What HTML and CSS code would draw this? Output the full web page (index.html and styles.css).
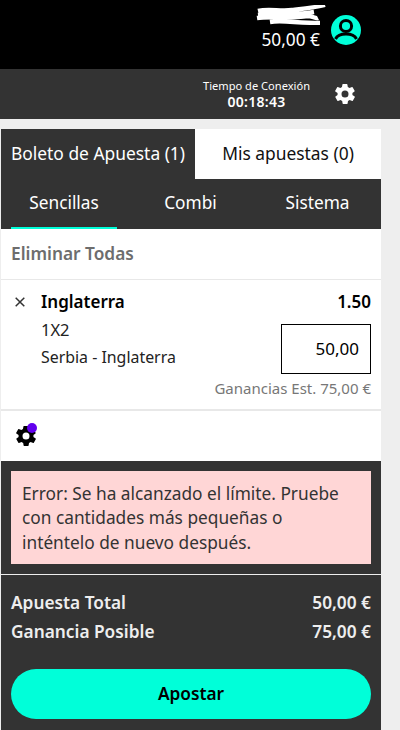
FILE: index.html
```html
<!DOCTYPE html>
<html>
<head>
    <title>Boleto de Apuesta</title>
    <link rel="stylesheet" href="styles.css">
</head>
<body>
    <header class="top-bar">
        <div class="account">
            <svg class="scribble" width="70" height="20" viewBox="0 0 70 20">
                <path d="M2 6 C14 3 24 7 36 5 C46 4 58 3 69 0 M2 10 C18 8 36 11 58 7 M1 13 C14 11 34 14 52 11 C56 11 60 14 62 13 M14 17 C26 15 40 18 64 18" fill="none" stroke="#fff" stroke-width="4.4"/>
            </svg>
            <span class="balance">50,00 €</span>
        </div>
        <svg class="avatar" width="30" height="30" viewBox="0 0 30 30">
            <circle cx="15" cy="15" r="15" fill="#00ffd9"/>
            <circle cx="15" cy="11" r="5.6" fill="none" stroke="#000" stroke-width="3"/>
            <path d="M4.5 24 C6.5 19.8 10 19 15 19 C20 19 23.5 19.8 25.5 24" fill="none" stroke="#000" stroke-width="3"/>
        </svg>
    </header>

    <div class="session-bar">
        <div class="session">
            <div class="session-label">Tiempo de Conexión</div>
            <div class="session-time">00:18:43</div>
        </div>
        <svg class="gear" width="24" height="24" viewBox="0 0 24 24">
            <path fill="#fff" d="M19.4 13a7.6 7.6 0 0 0 0-2l2.1-1.6a.5.5 0 0 0 .1-.6l-2-3.5a.5.5 0 0 0-.6-.2l-2.5 1a7.3 7.3 0 0 0-1.7-1l-.4-2.6a.5.5 0 0 0-.5-.4h-4a.5.5 0 0 0-.5.4l-.4 2.6a7.3 7.3 0 0 0-1.7 1l-2.5-1a.5.5 0 0 0-.6.2l-2 3.5a.5.5 0 0 0 .1.6L4.6 11a7.6 7.6 0 0 0 0 2l-2.1 1.6a.5.5 0 0 0-.1.6l2 3.5a.5.5 0 0 0 .6.2l2.5-1a7.3 7.3 0 0 0 1.7 1l.4 2.6a.5.5 0 0 0 .5.4h4a.5.5 0 0 0 .5-.4l.4-2.6a7.3 7.3 0 0 0 1.7-1l2.5 1a.5.5 0 0 0 .6-.2l2-3.5a.5.5 0 0 0-.1-.6zM12 15.5a3.5 3.5 0 1 1 0-7 3.5 3.5 0 0 1 0 7z"/>
        </svg>
    </div>

    <main class="slip">
        <div class="tabs">
            <div class="tab tab-active">Boleto de Apuesta (1)</div>
            <div class="tab">Mis apuestas (0)</div>
        </div>

        <div class="subtabs">
            <div class="subtab subtab-active">Sencillas</div>
            <div class="subtab">Combi</div>
            <div class="subtab">Sistema</div>
        </div>

        <div class="remove-all">Eliminar Todas</div>

        <div class="selection">
            <svg class="close" width="10" height="10" viewBox="0 0 10 10">
                <path d="M0.7 0.7 L9.3 9.3 M9.3 0.7 L0.7 9.3" stroke="#333" stroke-width="1.5"/>
            </svg>
            <div class="selection-info">
                <div class="selection-head">
                    <span>Inglaterra</span>
                    <span>1.50</span>
                </div>
                <div class="selection-body">
                    <div>
                        <div class="market">1X2</div>
                        <div class="match">Serbia - Inglaterra</div>
                    </div>
                    <div class="stake">50,00</div>
                </div>
                <div class="estimate">Ganancias Est. 75,00 €</div>
            </div>
        </div>

        <div class="options">
            <span class="options-icon">
                <svg width="24" height="24" viewBox="0 0 24 24">
                    <path fill="#000" d="M19.4 13a7.6 7.6 0 0 0 0-2l2.1-1.6a.5.5 0 0 0 .1-.6l-2-3.5a.5.5 0 0 0-.6-.2l-2.5 1a7.3 7.3 0 0 0-1.7-1l-.4-2.6a.5.5 0 0 0-.5-.4h-4a.5.5 0 0 0-.5.4l-.4 2.6a7.3 7.3 0 0 0-1.7 1l-2.5-1a.5.5 0 0 0-.6.2l-2 3.5a.5.5 0 0 0 .1.6L4.6 11a7.6 7.6 0 0 0 0 2l-2.1 1.6a.5.5 0 0 0-.1.6l2 3.5a.5.5 0 0 0 .6.2l2.5-1a7.3 7.3 0 0 0 1.7 1l.4 2.6a.5.5 0 0 0 .5.4h4a.5.5 0 0 0 .5-.4l.4-2.6a7.3 7.3 0 0 0 1.7-1l2.5 1a.5.5 0 0 0 .6-.2l2-3.5a.5.5 0 0 0-.1-.6zM12 15.5a3.5 3.5 0 1 1 0-7 3.5 3.5 0 0 1 0 7z"/>
                </svg>
                <span class="options-dot"></span>
            </span>
        </div>

        <div class="footer">
            <div class="error-wrap">
                <div class="error">Error: Se ha alcanzado el límite. Pruebe con cantidades más pequeñas o inténtelo de nuevo después.</div>
            </div>
            <div class="totals">
                <div class="total-row">
                    <span>Apuesta Total</span>
                    <span>50,00 €</span>
                </div>
                <div class="total-row">
                    <span>Ganancia Posible</span>
                    <span>75,00 €</span>
                </div>
                <button class="place-bet">Apostar</button>
            </div>
        </div>
    </main>
</body>
</html>
```

FILE: styles.css
```css
body {
    font-family: "Noto Sans", sans-serif;
    margin: 0;
    height: 730px;
    overflow: hidden;
    background-color: #eee;
    color: #000;
}
.top-bar {
    display: flex;
    justify-content: flex-end;
    height: 69px;
    padding-right: 39px;
    background-color: #000;
    color: #fff;
}
.account {
    display: flex;
    flex-direction: column;
    align-items: flex-end;
    margin-right: 11px;
    padding-top: 5px;
}
.scribble {
    display: block;
    margin-right: -6px;
}
.balance {
    font-size: 17.3px;
    line-height: 24px;
    margin-top: 3px;
}
.avatar {
    margin-top: 15px;
}
.session-bar {
    display: flex;
    justify-content: flex-end;
    align-items: center;
    height: 50px;
    padding-right: 43px;
    background-color: #333;
    color: #fff;
}
.session {
    margin-right: 23px;
    text-align: center;
}
.session-label {
    font-size: 11.1px;
    line-height: 15px;
}
.session-time {
    font-size: 14px;
    font-weight: 600;
    line-height: 17px;
    letter-spacing: 0.3px;
}
.slip {
    width: 380px;
    margin: 10px 0 0 1px;
    background-color: #fff;
}
.tabs {
    display: flex;
    height: 50px;
}
.tab {
    display: flex;
    align-items: center;
    justify-content: center;
    width: 186px;
    padding-bottom: 2px;
    box-sizing: border-box;
    font-size: 17.4px;
    color: #111;
}
.tab-active {
    width: 194px;
    background-color: #333;
    color: #fff;
}
.subtabs {
    display: flex;
    height: 50px;
    background-color: #333;
}
.subtab {
    flex: 1;
    font-size: 17.3px;
    line-height: 48px;
    text-align: center;
    color: #fff;
    box-sizing: border-box;
}
.subtab-active {
    flex: none;
    width: 106px;
    height: 50px;
    margin: 0 10px;
    border-bottom: 2px solid #00ffd9;
}
.remove-all {
    height: 50px;
    padding-left: 10px;
    font-size: 17.3px;
    font-weight: 600;
    line-height: 50px;
    color: #6d6d6d;
    border-bottom: 1px solid #e8e8e8;
}
.selection {
    display: flex;
    height: 129px;
    padding: 0 10px 0 14px;
    border-bottom: 2px solid #e8e8e8;
}
.close {
    margin: 17px 16px 0 0;
}
.selection-info {
    flex: 1;
}
.selection-head {
    display: flex;
    justify-content: space-between;
    padding-top: 9px;
    font-size: 17px;
    font-weight: 600;
    line-height: 26px;
}
.selection-body {
    display: flex;
    justify-content: space-between;
    height: 50px;
    margin-top: 9px;
}
.market {
    margin-top: -7px;
    font-size: 16.5px;
    line-height: 26px;
    color: #222;
}
.match {
    font-size: 15.9px;
    line-height: 28px;
    color: #222;
}
.stake {
    box-sizing: border-box;
    width: 90px;
    height: 50px;
    padding-right: 11px;
    font-size: 17px;
    line-height: 48px;
    text-align: right;
    border: 1px solid #000;
}
.estimate {
    margin-top: 2px;
    font-size: 15px;
    line-height: 24px;
    text-align: right;
    color: #777;
}
.options {
    height: 50px;
    padding-left: 13px;
}
.options-icon {
    position: relative;
    display: inline-block;
    width: 24px;
    height: 24px;
    margin-top: 13px;
}
.options-dot {
    position: absolute;
    top: -1px;
    right: 1px;
    width: 10px;
    height: 10px;
    border-radius: 50%;
    background-color: #6200ee;
}
.footer {
    height: 269px;
    background-color: #333;
}
.error-wrap {
    padding: 10px;
    border-bottom: 1px solid #eee;
}
.error {
    padding: 11px 21px 9px 11px;
    font-size: 17.3px;
    line-height: 24.3px;
    color: #333;
    background-color: #ffd6d6;
}
.totals {
    padding: 13px 10px 0;
    color: #eee;
}
.total-row {
    display: flex;
    justify-content: space-between;
    font-size: 17.3px;
    font-weight: 600;
    line-height: 29px;
}
.place-bet {
    display: block;
    width: 100%;
    height: 50px;
    margin-top: 23px;
    font-family: inherit;
    font-size: 17.3px;
    font-weight: 600;
    color: #000;
    background-color: #00ffd9;
    border: none;
    border-radius: 25px;
    cursor: pointer;
}
```
